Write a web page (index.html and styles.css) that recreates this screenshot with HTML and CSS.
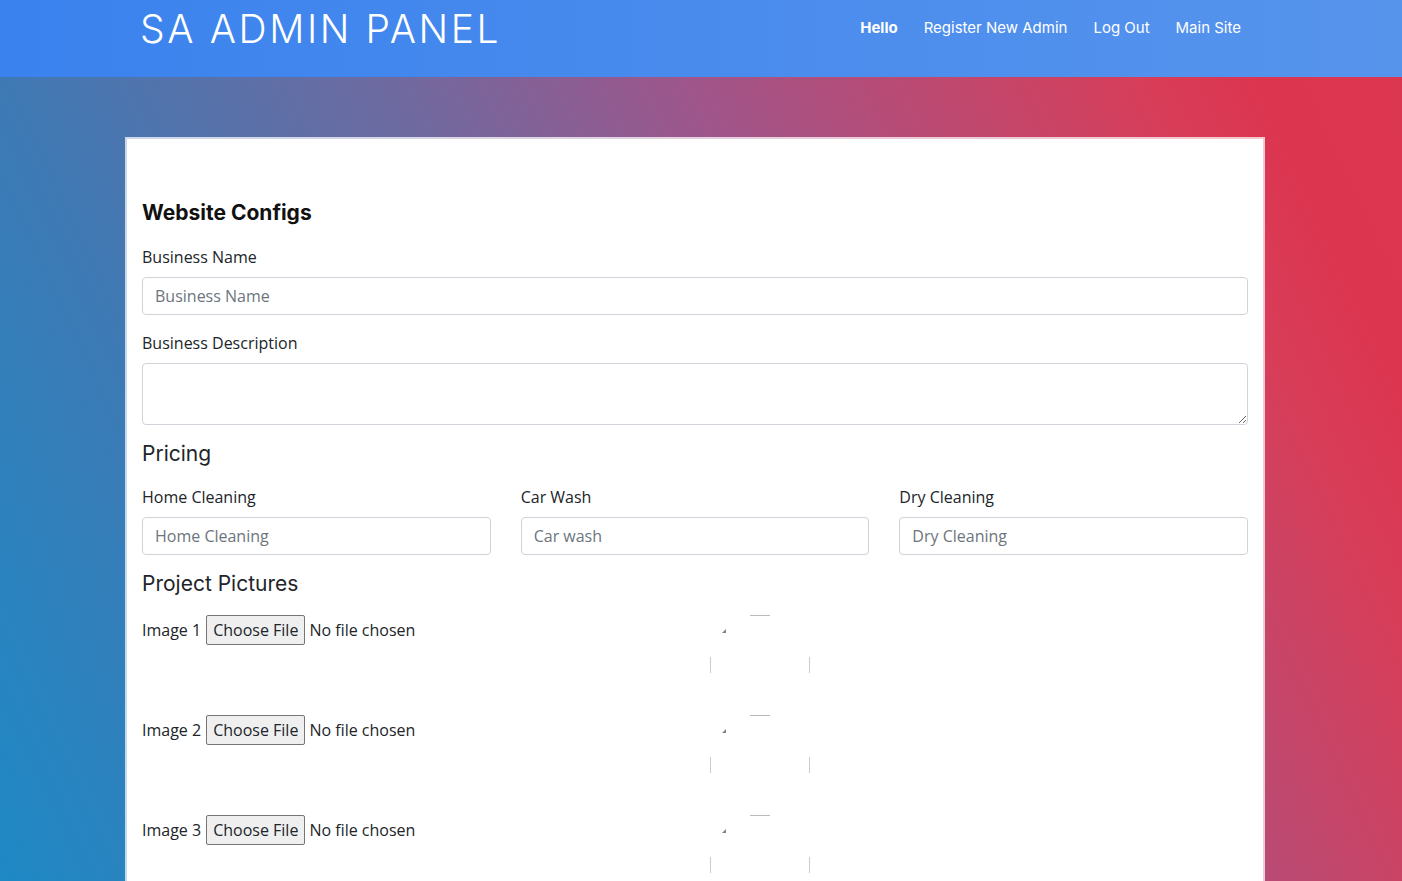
FILE: index.html
```html
<!DOCTYPE html>
<html lang="en">
<head>
<meta charset="utf-8">
<title>SA Admin Panel</title>
<link rel="stylesheet" href="styles.css">
</head>
<body>
<header class="navbar">
  <div class="nav-inner">
    <a class="brand" href="#">SA ADMIN PANEL</a>
    <nav class="nav-links">
      <a class="nav-link bold" href="#">Hello</a>
      <a class="nav-link" href="#">Register New Admin</a>
      <a class="nav-link" href="#">Log Out</a>
      <a class="nav-link" href="#">Main Site</a>
    </nav>
  </div>
</header>
<main class="page">
  <section class="card">
    <h4 class="title">Website Configs</h4>
    <div class="form-group">
      <label class="label">Business Name</label>
      <input class="control" type="text" placeholder="Business Name">
    </div>
    <div class="form-group">
      <label class="label">Business Description</label>
      <textarea class="control area"></textarea>
    </div>
    <h4 class="section">Pricing</h4>
    <div class="cols3">
      <div>
        <label class="label">Home Cleaning</label>
        <input class="control" type="text" placeholder="Home Cleaning">
      </div>
      <div>
        <label class="label">Car Wash</label>
        <input class="control" type="text" placeholder="Car wash">
      </div>
      <div>
        <label class="label">Dry Cleaning</label>
        <input class="control" type="text" placeholder="Dry Cleaning">
      </div>
    </div>
    <h4 class="section pics">Project Pictures</h4>
    <div class="img-row">
      <div class="img-field"><span class="img-label">Image 1</span><input class="file" type="file"></div>
      <div class="preview"><svg width="100" height="60" viewBox="0 0 100 60"><line x1="40" y1="0.5" x2="60" y2="0.5" stroke="#bbb"/><line x1="0.5" y1="42" x2="0.5" y2="58" stroke="#ccc"/><line x1="99.5" y1="42" x2="99.5" y2="58" stroke="#ccc"/><path d="M12 18 L16 14 L16 18 Z" fill="#7a8a7a"/></svg></div>
    </div>
    <div class="img-row">
      <div class="img-field"><span class="img-label">Image 2</span><input class="file" type="file"></div>
      <div class="preview"><svg width="100" height="60" viewBox="0 0 100 60"><line x1="40" y1="0.5" x2="60" y2="0.5" stroke="#bbb"/><line x1="0.5" y1="42" x2="0.5" y2="58" stroke="#ccc"/><line x1="99.5" y1="42" x2="99.5" y2="58" stroke="#ccc"/><path d="M12 18 L16 14 L16 18 Z" fill="#7a8a7a"/></svg></div>
    </div>
    <div class="img-row">
      <div class="img-field"><span class="img-label">Image 3</span><input class="file" type="file"></div>
      <div class="preview"><svg width="100" height="60" viewBox="0 0 100 60"><line x1="40" y1="0.5" x2="60" y2="0.5" stroke="#bbb"/><line x1="0.5" y1="42" x2="0.5" y2="58" stroke="#ccc"/><line x1="99.5" y1="42" x2="99.5" y2="58" stroke="#ccc"/><path d="M12 18 L16 14 L16 18 Z" fill="#7a8a7a"/></svg></div>
    </div>
  </section>
</main>
</body>
</html>
```
FILE: styles.css
```css
* { box-sizing: border-box; }
html, body { margin: 0; padding: 0; }
body {
  font-family: "Open Sans", "Liberation Sans", sans-serif;
  color: #212529;
  min-height: 100vh;
  background: linear-gradient(65deg, #1e89c5 0%, #3d7ab5 20%, #6e6aa0 42%, #a0558a 59%, #c4466a 75%, #d83d58 84%, #dc3550 90%, #dc3752 100%);
  background-attachment: fixed;
  overflow: hidden;
}
.navbar {
  height: 77px;
  background: linear-gradient(to right, #3a82ee, #4c8ded 60%, #5694ec);
}
.nav-inner {
  width: 1140px;
  margin-left: calc(50% - 576px);
  padding: 0 11px 0 15px;
  display: flex;
  align-items: flex-start;
  justify-content: space-between;
}
.brand {
  font-family: Inter, "DejaVu Sans", sans-serif;
  font-weight: 300;
  font-size: 39px;
  letter-spacing: 2.6px;
  color: #fff;
  text-decoration: none;
  line-height: 58px;
}
.nav-links {
  display: flex;
  padding-top: 17px;
}
.nav-link {
  font-family: Inter, "DejaVu Sans", sans-serif;
  font-size: 15px;
  color: #fff;
  text-decoration: none;
  padding: 0 13px;
  line-height: 22px;
}
.nav-link.bold { font-weight: 700; }
.page {
  width: 1140px;
  margin: 60px 0 0 calc(50% - 576px);
}
.card {
  background: #fff;
  border: 2px solid rgba(255,255,255,0.72);
  background-clip: padding-box;
  padding: 61px 15px 200px;
}
.title {
  font-family: Inter, "DejaVu Sans", sans-serif;
  font-weight: 700;
  font-size: 21px;
  line-height: 26px;
  margin: 0 0 19px;
  color: #111;
}
.form-group { margin-bottom: 16px; }
.label {
  display: block;
  font-size: 16px;
  line-height: 24px;
  margin-bottom: 8px;
}
.control {
  display: block;
  width: 100%;
  height: 38px;
  padding: 6px 12px;
  font-family: "Open Sans", "Liberation Sans", sans-serif;
  font-size: 16px;
  color: #495057;
  border: 1px solid #ced4da;
  border-radius: 4px;
  background: #fff;
}
.control::placeholder { color: #6c757d; }
.area { height: 62px; resize: vertical; }
.section {
  font-family: Inter, "DejaVu Sans", sans-serif;
  font-weight: 400;
  font-size: 21px;
  line-height: 26px;
  margin: 0 0 18px;
  color: #212529;
}
.cols3 {
  display: grid;
  grid-template-columns: repeat(3, 1fr);
  column-gap: 30px;
  margin-bottom: 16px;
}
.pics { margin-bottom: 18px; }
.img-row {
  display: grid;
  grid-template-columns: 1fr 1fr;
  column-gap: 30px;
  height: 60px;
  margin-bottom: 40px;
}
.img-field {
  display: flex;
  align-items: center;
  height: 30px;
  font-size: 16px;
}
.img-label { margin-right: 5px; }
.file {
  font-family: "Open Sans", "Liberation Sans", sans-serif;
  font-size: 16px;
  color: #212529;
}
.file::file-selector-button {
  font-family: "Open Sans", "Liberation Sans", sans-serif;
  font-size: 16px;
  color: #212529;
  height: 30px;
  padding: 1px 6px;
  margin-right: 4px;
  background: #efefef;
  border: 1px solid #767676;
  border-radius: 2px;
}
.preview { height: 60px; }
.preview svg { display: block; }
```
